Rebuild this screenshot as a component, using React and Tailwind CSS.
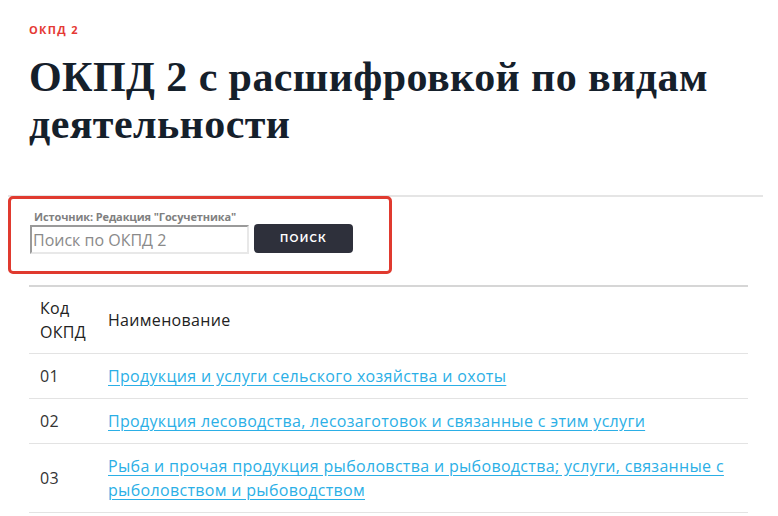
export default function App() {
  const rows = [
    { code: "01", name: "Продукция и услуги сельского хозяйства и охоты" },
    { code: "02", name: "Продукция лесоводства, лесозаготовок и связанные с этим услуги" },
    {
      code: "03",
      name: "Рыба и прочая продукция рыболовства и рыбоводства; услуги, связанные с рыболовством и рыбоводством",
    },
  ];

  return (
    <div className="w-[778px] h-[516px] overflow-hidden bg-white font-['Open_Sans','Lato',sans-serif]">
      <div className="pl-[29px] pt-[24px]">
        <div className="text-[11px] font-bold tracking-[0.12em] text-[#e53935] leading-[12px]">ОКПД 2</div>
        <h1 className="mt-[18px] w-[740px] font-['Liberation_Serif',serif] font-bold text-[42px] leading-[47px] tracking-[0.01em] text-[#15202b]">
          ОКПД 2 с расшифровкой по видам деятельности
        </h1>
      </div>

      <div className="mt-[47px] ml-[8px] mr-[15px] border-t-2 border-[#e5e5e5]">
        <div className="relative -mt-[1px] w-[384px] h-[78px] border-[3px] border-[#e03a2f] rounded-[5px] pt-[11px] pl-[23px]">
          <div className="text-[11px] font-bold text-[#808080] leading-[14px] tracking-[-0.01em]">Источник: Редакция "Госучетника"</div>
          <div className="flex items-center gap-[5px] mt-[1px] -ml-[4px]">
            <div className="w-[219px] h-[29px] border-2 border-t-[#9a9a9a] border-l-[#9a9a9a] border-b-[#e8e8e8] border-r-[#e8e8e8] flex items-center pl-[1px]">
              <span className="text-[16px] text-[#8a8a8a]">Поиск по ОКПД 2</span>
            </div>
            <button className="w-[99px] h-[29px] -mt-[2px] bg-[#2e303b] rounded-[4px] text-white text-[11px] font-bold tracking-[0.12em] font-['Lato',sans-serif]">
              ПОИСК
            </button>
          </div>
        </div>
      </div>

      <table className="mt-[11px] ml-[29px] w-[719px] border-t-2 border-[#d6d6d6] text-[16px] tracking-[0.02em] text-[#222]">
        <thead>
          <tr className="border-b border-[#e3e3e3]">
            <th className="w-[79px] h-[67px] pl-[11px] text-left font-normal leading-[24px]">
              Код
              <br />
              ОКПД
            </th>
            <th className="text-left font-normal">Наименование</th>
          </tr>
        </thead>
        <tbody>
          {rows.map((r) => (
            <tr key={r.code} className="border-b border-[#e3e3e3]">
              <td className="pl-[11px] h-[45px] align-middle text-[#333]">{r.code}</td>
              <td className="py-[10px] leading-[24px]">
                <a href="#" className="text-[#2bafe6] underline underline-offset-[3px]">
                  {r.name}
                </a>
              </td>
            </tr>
          ))}
        </tbody>
      </table>
    </div>
  );
}
